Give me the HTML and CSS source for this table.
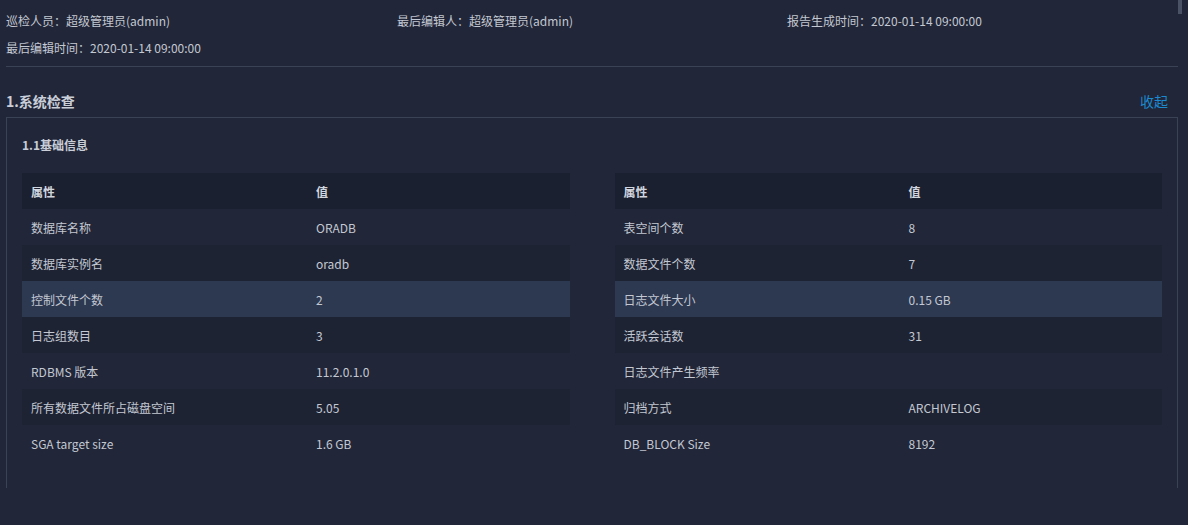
FILE: index.html
```html
<!DOCTYPE html>
<html lang="zh-CN">
<head>
<meta charset="utf-8">
<title>巡检报告</title>
<link rel="stylesheet" href="styles.css">
</head>
<body>
<div class="page">
  <div class="meta">
    <div class="meta-item">巡检人员：超级管理员(admin)</div>
    <div class="meta-item">最后编辑人：超级管理员(admin)</div>
    <div class="meta-item">报告生成时间：2020-01-14 09:00:00</div>
    <div class="meta-item">最后编辑时间：2020-01-14 09:00:00</div>
  </div>
  <div class="section-head">
    <h2 class="section-title">1.系统检查</h2>
    <a class="collapse">收起</a>
  </div>
  <div class="card">
    <h3 class="sub-title">1.1基础信息</h3>
    <div class="tables">
      <table class="info">
        <thead><tr><th class="c1">属性</th><th>值</th></tr></thead>
        <tbody>
          <tr><td>数据库名称</td><td>ORADB</td></tr>
          <tr class="stripe"><td>数据库实例名</td><td>oradb</td></tr>
          <tr class="hl"><td>控制文件个数</td><td>2</td></tr>
          <tr class="stripe"><td>日志组数目</td><td>3</td></tr>
          <tr><td>RDBMS 版本</td><td>11.2.0.1.0</td></tr>
          <tr class="stripe"><td>所有数据文件所占磁盘空间</td><td>5.05</td></tr>
          <tr><td>SGA target size</td><td>1.6 GB</td></tr>
        </tbody>
      </table>
      <table class="info">
        <thead><tr><th class="c1">属性</th><th>值</th></tr></thead>
        <tbody>
          <tr><td>表空间个数</td><td>8</td></tr>
          <tr class="stripe"><td>数据文件个数</td><td>7</td></tr>
          <tr class="hl"><td>日志文件大小</td><td>0.15 GB</td></tr>
          <tr class="stripe"><td>活跃会话数</td><td>31</td></tr>
          <tr><td>日志文件产生频率</td><td></td></tr>
          <tr class="stripe"><td>归档方式</td><td>ARCHIVELOG</td></tr>
          <tr><td>DB_BLOCK Size</td><td>8192</td></tr>
        </tbody>
      </table>
    </div>
  </div>
</div>
<div class="scroll-thumb"></div>
</body>
</html>
```
FILE: styles.css
```css
html, body {
  margin: 0;
  padding: 0;
  background: #212638;
  height: 100%;
  overflow: hidden;
}
body {
  font-family: "Noto Sans CJK SC", "Noto Sans", sans-serif;
  font-size: 12px;
  color: #c3c8d2;
}
.page {
  width: 1172px;
  margin: 0 0 0 6px;
  padding-top: 7px;
}
.meta {
  display: grid;
  grid-template-columns: 391px 390px 391px;
  grid-auto-rows: 27px;
  align-items: center;
  padding-bottom: 5px;
  border-bottom: 1px solid #3a4256;
}
.meta-item {
  line-height: 27px;
  white-space: nowrap;
}
.section-head {
  display: flex;
  justify-content: space-between;
  align-items: center;
  height: 50px;
}
.section-title {
  margin: 0;
  padding-top: 18px;
  font-size: 14px;
  font-weight: 700;
  color: #c9ced8;
}
.collapse {
  padding-top: 18px;
  margin-right: 10px;
  font-size: 14px;
  color: #1b8ad0;
  cursor: pointer;
}
.card {
  border: 1px solid #3a4256;
  border-bottom: none;
  padding: 15px 15px 27px 15px;
}
.sub-title {
  margin: 0;
  font-size: 12px;
  font-weight: 700;
  line-height: 24px;
  color: #c9ced8;
  padding-bottom: 16px;
}
.tables {
  display: flex;
  gap: 45px;
}
.info {
  width: 548px;
  border-collapse: collapse;
  table-layout: fixed;
}
.info th, .info td {
  height: 36px;
  padding: 0 9px;
  text-align: left;
  vertical-align: middle;
  white-space: nowrap;
}
.info th {
  background: #1b2030;
  font-weight: 700;
  color: #d0d5de;
}
.info .c1 {
  width: 267px;
}
.info .stripe td {
  background: #1e2333;
}
.info .hl td {
  background: #2d3851;
}
.scroll-thumb {
  position: absolute;
  top: 0;
  left: 1178px;
  width: 4px;
  height: 14px;
  background: #4a5266;
}
```
